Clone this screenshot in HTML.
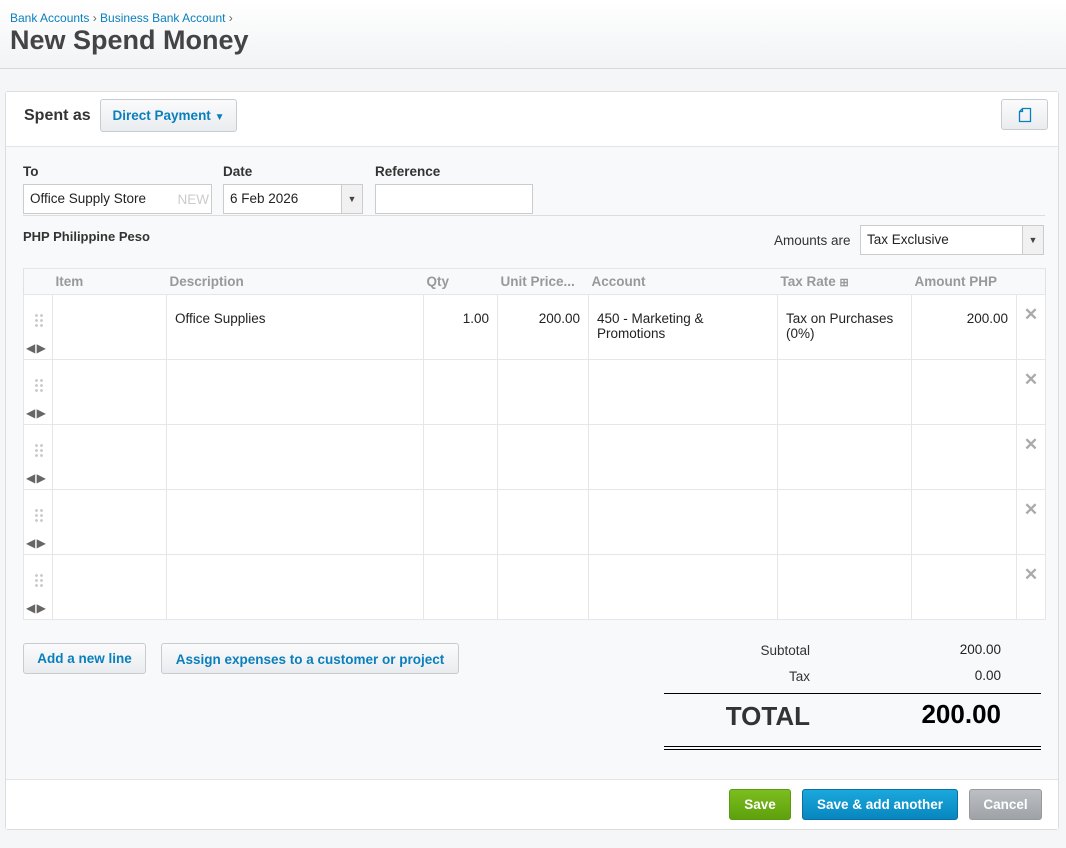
<!DOCTYPE html>
<html><head><meta charset="utf-8"><style>
*{box-sizing:border-box;margin:0;padding:0}
body{width:1066px;height:848px;background:#f5f6f8;font-family:"Liberation Sans",Arial,sans-serif;font-size:13.5px;color:#222;position:relative;overflow:hidden}
.a{position:absolute}
.hdr{left:0;top:0;width:1066px;height:69px;background:linear-gradient(#fff,#f2f3f5);border-bottom:1px solid #d8d8d8}
.bc{left:10px;top:11px;font-size:12px;color:#0a7fbd}
.bc span{color:#666}
h1{position:absolute;left:10px;top:25px;font-size:27px;font-weight:bold;color:#444}
.panel{left:5px;top:91px;width:1054px;height:739px;background:#f8f9fa;border:1px solid #ddd;border-radius:3px}
.top{left:0;top:0;width:1052px;height:55px;background:#fff;border-bottom:1px solid #e3e3e3}
.foot{left:0;top:687px;width:1052px;height:50px;background:#fff;border-top:1px solid #e3e3e3}
.btn{border:1px solid #c8ccd0;border-radius:3px;background:linear-gradient(#fbfbfc,#e9ecef);font-weight:bold;color:#0a7fbd;font-size:13.5px;text-align:center}
.lbl{font-size:13.5px;font-weight:bold;color:#333}
.inp{background:#fff;border:1px solid #ccc;height:30px;font-size:13.5px;padding:6px 6px}
table{position:absolute;left:23px;top:268px;width:1022px;table-layout:fixed;border-collapse:collapse;background:#fff;border:1px solid #e1e1e1}
td,th{border:1px solid #e6e6e6;vertical-align:top;font-size:13.5px}
th{height:26px;background:#f8f9fa;color:#999;font-weight:bold;text-align:left;padding:5px 3px;border-left:none;border-right:none}
td{height:65px;padding:16px 8px 0}
.r{text-align:right}
.x{color:#aaa;font-size:17px;text-align:center;padding:10px 0 0;font-weight:bold}
.h{position:relative;padding:0}
.dots{position:absolute;left:10px;top:18px;width:9px;height:15px;background-image:radial-gradient(#ccc 1.3px,transparent 1.6px);background-size:5px 5px}
.arr{position:absolute;left:2px;top:46px;font-size:12px;color:#666;letter-spacing:-1px}
</style></head><body>
<div class="a hdr"></div>
<div class="a bc">Bank Accounts <span>›</span> Business Bank Account <span>›</span></div>
<h1>New Spend Money</h1>
<div class="a panel">
 <div class="a top"></div>
 <div class="a foot"></div>
</div>
<div class="a lbl" style="left:24px;top:107px;font-size:16px">Spent as</div>
<div class="a btn" style="left:100px;top:99px;width:137px;height:33px;padding-top:8px">Direct Payment <span style="font-size:10px">▼</span></div>
<div class="a btn" style="left:1001px;top:99px;width:47px;height:31px;padding-top:7px"><svg width="14" height="16" viewBox="0 0 14 16"><path d="M4.5 1.5H12.5V14.5H1.5V4.5Z M4.5 1.5V4.5H1.5" fill="none" stroke="#0a7fbd" stroke-width="1.3"/></svg></div>
<div class="a lbl" style="left:23px;top:164px">To</div>
<div class="a lbl" style="left:223px;top:164px">Date</div>
<div class="a lbl" style="left:375px;top:164px">Reference</div>
<div class="a inp" style="left:23px;top:184px;width:189px">Office Supply Store<span style="position:absolute;right:2px;top:7px;color:#ccc">NEW</span></div>
<div class="a inp" style="left:223px;top:184px;width:140px">6 Feb 2026<span style="position:absolute;right:0;top:0;width:21px;height:28px;border-left:1px solid #ccc;background:#f1f1f1;font-size:9px;text-align:center;padding-top:9px;color:#444">▼</span></div>
<div class="a inp" style="left:375px;top:184px;width:158px"></div>
<div class="a" style="left:23px;top:215px;width:1022px;border-top:1px solid #ddd"></div>
<div class="a lbl" style="left:23px;top:229px;font-size:13px">PHP Philippine Peso</div>
<div class="a" style="left:774px;top:233px;color:#333">Amounts are</div>
<div class="a inp" style="left:860px;top:225px;width:184px">Tax Exclusive<span style="position:absolute;right:0;top:0;width:21px;height:28px;border-left:1px solid #ccc;background:#f1f1f1;font-size:9px;text-align:center;padding-top:9px;color:#444">▼</span></div>
<table>
<colgroup><col style="width:29px"><col style="width:114px"><col style="width:257px"><col style="width:74px"><col style="width:91px"><col style="width:189px"><col style="width:134px"><col style="width:105px"><col style="width:29px"></colgroup>
<tr><th></th><th>Item</th><th>Description</th><th>Qty</th><th>Unit Price...</th><th>Account</th><th>Tax Rate <span style="font-size:11px">⊞</span></th><th>Amount PHP</th><th></th></tr>
<tr><td class="h"><div class="dots"></div><div class="arr">◀ ▶</div></td><td></td><td>Office Supplies</td><td class="r">1.00</td><td class="r">200.00</td><td style="line-height:15px">450 - Marketing &amp; Promotions</td><td style="line-height:15px">Tax on Purchases (0%)</td><td class="r">200.00</td><td class="x">✕</td></tr>
<tr><td class="h"><div class="dots"></div><div class="arr">◀ ▶</div></td><td></td><td></td><td></td><td></td><td></td><td></td><td></td><td class="x">✕</td></tr>
<tr><td class="h"><div class="dots"></div><div class="arr">◀ ▶</div></td><td></td><td></td><td></td><td></td><td></td><td></td><td></td><td class="x">✕</td></tr>
<tr><td class="h"><div class="dots"></div><div class="arr">◀ ▶</div></td><td></td><td></td><td></td><td></td><td></td><td></td><td></td><td class="x">✕</td></tr>
<tr><td class="h"><div class="dots"></div><div class="arr">◀ ▶</div></td><td></td><td></td><td></td><td></td><td></td><td></td><td></td><td class="x">✕</td></tr>
</table>
<div class="a btn" style="left:23px;top:643px;width:123px;height:31px;padding-top:7px">Add a new line</div>
<div class="a btn" style="left:161px;top:643px;width:298px;height:31px;padding-top:8px">Assign expenses to a customer or project</div>
<div class="a" style="left:700px;top:643px;width:110px;text-align:right;color:#333">Subtotal</div>
<div class="a" style="left:900px;top:642px;width:101px;text-align:right">200.00</div>
<div class="a" style="left:700px;top:669px;width:110px;text-align:right;color:#333">Tax</div>
<div class="a" style="left:900px;top:668px;width:101px;text-align:right">0.00</div>
<div class="a" style="left:664px;top:693px;width:377px;border-top:1px solid #000"></div>
<div class="a" style="left:660px;top:701px;width:150px;text-align:right;font-size:26px;font-weight:bold;color:#333">TOTAL</div>
<div class="a" style="left:860px;top:699px;width:141px;text-align:right;font-size:26px;font-weight:bold;color:#000">200.00</div>
<div class="a" style="left:664px;top:746px;width:377px;height:4px;border-top:1px solid #000;border-bottom:1px solid #000"></div>
<div class="a" style="left:729px;top:789px;width:62px;height:31px;border:1px solid #5a9a10;border-radius:3px;background:linear-gradient(#7cbe1e,#5ea10d);color:#fff;font-weight:bold;text-align:center;padding-top:7px">Save</div>
<div class="a" style="left:802px;top:789px;width:156px;height:31px;border:1px solid #0a6fa5;border-radius:3px;background:linear-gradient(#1aa8dc,#0786bf);color:#fff;font-weight:bold;text-align:center;padding-top:7px">Save &amp; add another</div>
<div class="a" style="left:969px;top:789px;width:73px;height:31px;border:1px solid #999;border-radius:3px;background:linear-gradient(#bcbfc3,#9fa3a8);color:#fff;font-weight:bold;text-align:center;padding-top:7px">Cancel</div>
</body></html>
